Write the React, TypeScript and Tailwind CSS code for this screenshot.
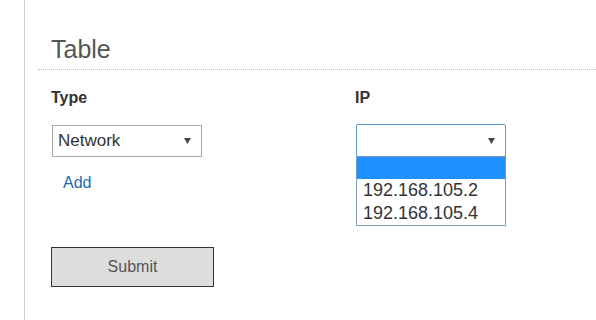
import React from 'react';

const Caret: React.FC = () => (
  <svg width="7" height="6" viewBox="0 0 7 6" className="shrink-0">
    <path d="M0 0 L7 0 L3.5 6 Z" fill="#444" />
  </svg>
);

const ipOptions = ['192.168.105.2', '192.168.105.4'];

const App: React.FC = () => {
  return (
    <div className="w-[596px] h-[320px] bg-white overflow-hidden font-['Liberation_Sans',Arial,sans-serif] text-[#333]">
      <div className="ml-[24px] h-full border-l border-[#d0d0d0]">
        <div className="pt-[34px] pl-[26px]">
          <h2 className="text-[25px] leading-[30px] text-[#555] font-normal">Table</h2>
        </div>
        <div className="mt-[5px] ml-[13px] border-t border-dotted border-[#bbb]" />

        <div className="flex pl-[26px] pt-[18px]">
          <div className="w-[304px]">
            <div className="text-[16px] font-bold leading-[20px]">Type</div>
            <div className="mt-[17px] ml-[1px] w-[150px] h-[32px] border border-[#aaa] flex items-center justify-between pl-[5px] pr-[10px]">
              <span className="text-[17px] leading-[20px]">Network</span>
              <Caret />
            </div>
            <div className="mt-[16px] ml-[12px] text-[16px] leading-[20px] text-[#1a6cb0]">Add</div>
          </div>

          <div className="relative">
            <div className="text-[16px] font-bold leading-[20px]">IP</div>
            <div className="mt-[16px] ml-[1px] w-[150px] h-[33px] border border-[#5b9bd5] rounded-[2px] flex items-center justify-end pr-[10px]">
              <Caret />
            </div>
            <div className="absolute left-[1px] top-[68px] w-[150px] border border-[#7f9db9] bg-white">
              <div className="h-[22px] bg-[#1e90ff]" />
              {ipOptions.map(ip => (
                <div key={ip} className="h-[23px] pl-[6px] text-[18px] leading-[23px]">{ip}</div>
              ))}
            </div>
          </div>
        </div>

        <div className="pl-[26px] mt-[54px]">
          <button className="w-[163px] h-[40px] bg-[#dddddd] border border-[#333] text-[16px] text-[#555]">
            Submit
          </button>
        </div>
      </div>
    </div>
  );
};

export default App;
